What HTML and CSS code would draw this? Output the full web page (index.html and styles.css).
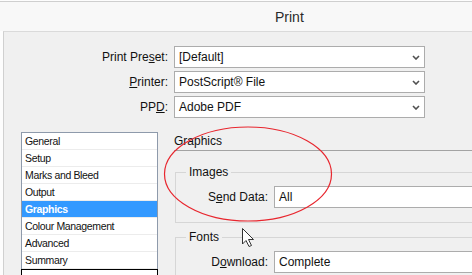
FILE: index.html
```html
<!DOCTYPE html>
<html lang="en">
<head>
    <meta charset="UTF-8">
    <meta name="viewport" content="width=device-width, initial-scale=1.0">
    <title>Print</title>
    <link rel="stylesheet" href="styles.css">
</head>
<body>
    <div class="window">
        <div class="titlebar"><span class="title">Print</span></div>

        <div class="panel">
            <div class="form-rows">
                <div class="row">
                    <span class="label">Print Pre<u>s</u>et:</span>
                    <div class="select">[Default]
                        <svg class="chevron" width="8" height="5" viewBox="0 0 8 5"><path d="M1 1 L4 4 L7 1" /></svg>
                    </div>
                </div>
                <div class="row">
                    <span class="label"><u>P</u>rinter:</span>
                    <div class="select">PostScript® File
                        <svg class="chevron" width="8" height="5" viewBox="0 0 8 5"><path d="M1 1 L4 4 L7 1" /></svg>
                    </div>
                </div>
                <div class="row">
                    <span class="label">PP<u>D</u>:</span>
                    <div class="select">Adobe PDF
                        <svg class="chevron" width="8" height="5" viewBox="0 0 8 5"><path d="M1 1 L4 4 L7 1" /></svg>
                    </div>
                </div>
            </div>

            <div class="lower">
                <div class="pages">
                    <ul class="page-list">
                        <li>General</li>
                        <li>Setup</li>
                        <li>Marks and Bleed</li>
                        <li>Output</li>
                        <li class="selected">Graphics</li>
                        <li>Colour Management</li>
                        <li>Advanced</li>
                        <li>Summary</li>
                    </ul>
                    <div class="blank"></div>
                </div>

                <div class="section">
                    <div class="section-title">Graphics</div>

                    <fieldset class="group">
                        <legend>Images</legend>
                        <div class="field">
                            <span class="field-label">S<u>e</u>nd Data:</span>
                            <div class="input">All</div>
                        </div>
                    </fieldset>

                    <fieldset class="group">
                        <legend>Fonts</legend>
                        <div class="field">
                            <span class="field-label">D<u>o</u>wnload:</span>
                            <div class="input">Complete</div>
                        </div>
                    </fieldset>
                </div>
            </div>
        </div>

        <!-- annotation drawn over the dialog -->
        <svg class="overlay" width="472" height="275" viewBox="0 0 472 275">
            <ellipse cx="248" cy="174" rx="83.5" ry="47" fill="none" stroke="#e8262e" stroke-width="1.2" />
            <path d="M242.5 228.5 L242.5 244 L246 240.5 L249 246.5 L251.5 245.5 L248.5 239.5 L253.5 239.5 Z" fill="#fff" stroke="#333" stroke-width="1" stroke-linejoin="round" />
        </svg>
    </div>
</body>
</html>
```

FILE: styles.css
```css
html, body {
    margin: 0;
    padding: 0;
    overflow: hidden;
}
body {
    font-family: "Liberation Sans", Arial, sans-serif;
    font-size: 12px;
    color: #111;
    background-color: #f8f8f8;
}
.window {
    position: relative;
    width: 472px;
    height: 275px;
    padding-top: 1px;
    box-sizing: border-box;
    background-color: #fdfdfd;
    overflow: hidden;
}
.titlebar {
    height: 29px;
    border-top: 1px solid #cfcfcf;
    background-color: #f8f8f8;
    display: flex;
    align-items: center;
    padding-left: 275px;
}
.title {
    font-size: 14px;
    color: #2a2a2a;
}
.panel {
    margin-left: 3px;
    height: 260px;
    padding-top: 14px;
    box-sizing: border-box;
    border-left: 1px solid #d0d0d0;
    border-top: 1px solid #dadada;
    background-color: #f0f0f0;
}
.row {
    display: flex;
    align-items: center;
    gap: 6px;
    height: 22px;
    margin-bottom: 3px;
}
.label {
    width: 164px;
    text-align: right;
}
.select {
    width: 251px;
    height: 22px;
    box-sizing: border-box;
    border: 1px solid #acacac;
    background-color: white;
    padding-left: 4px;
    display: flex;
    align-items: center;
    justify-content: space-between;
}
.chevron {
    margin-right: 4px;
}
.chevron path {
    fill: none;
    stroke: #505050;
    stroke-width: 1.6;
}
.lower {
    display: flex;
    gap: 16px;
    margin-top: 14px;
    padding-left: 17px;
}
.pages {
    flex-shrink: 0;
    width: 137px;
}
.page-list {
    list-style: none;
    margin: 0;
    padding: 0;
    border: 1px solid #8e9aab;
    border-bottom: none;
    background-color: white;
    font-size: 10.5px;
    letter-spacing: -0.35px;
}
.page-list li {
    height: 16px;
    line-height: 16px;
    padding-left: 3px;
    border-bottom: 1px solid #ececec;
    color: #111;
}
.page-list li.selected {
    background-color: #3399ff;
    color: white;
    font-weight: bold;
}
.blank {
    height: 20px;
    border: 1px solid #000;
    background-color: white;
}
.section {
    flex-shrink: 0;
    width: 320px;
}
.section-title {
    height: 18px;
    line-height: 18px;
    border-bottom: 1px solid #a3a3a3;
}
.group {
    margin: 14px 0 0 1px;
    padding: 7px 0 14px 0;
    border: 1px solid #d6d6d6;
    border-right: none;
}
.group + .group {
    margin-top: 7px;
    padding-bottom: 20px;
}
.group legend {
    margin-left: 10px;
    padding: 0 3px;
    line-height: 14px;
}
.field {
    display: flex;
    align-items: center;
    gap: 6px;
}
.field-label {
    width: 92px;
    text-align: right;
}
.input {
    flex: 1;
    height: 22px;
    box-sizing: border-box;
    border: 1px solid #acacac;
    border-right: none;
    background-color: white;
    padding-left: 4px;
    display: flex;
    align-items: center;
}
.overlay {
    position: absolute;
    top: 0;
    left: 0;
    pointer-events: none;
}
```
